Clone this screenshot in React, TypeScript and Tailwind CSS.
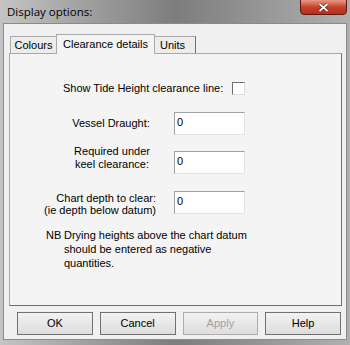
import React from 'react';

const font = "font-['Liberation_Sans',Arial,sans-serif]";

const Field = () => (
  <div className="w-[71px] h-[23px] shrink-0 bg-white border border-t-[#a0a0a0] border-l-[#a0a0a0] border-r-[#e3e3e3] border-b-[#e3e3e3] text-[11px] leading-[13px] pl-[2px] pt-[3px] text-black">
    0
  </div>
);

const Button = ({ text, disabled }: { text: string; disabled?: boolean }) => (
  <div
    className={`w-[76px] h-[23px] flex items-center justify-center border bg-gradient-to-b from-[#f2f2f2] to-[#dddddd] text-[11px] ${
      disabled ? 'text-[#a0a0a0] border-[#adadad]' : 'text-black border-[#707070]'
    }`}
  >
    {text}
  </div>
);

const App = () => {
  return (
    <div className={`w-[350px] h-[345px] overflow-hidden bg-gradient-to-r from-[#c4c4c4] via-[#7d7d7d] to-[#b0b0b0] ${font}`}>
      {/* title bar */}
      <div className="h-[23px] flex items-start justify-between pl-[7px] pr-[3px]">
        <span className="text-[11.5px] leading-[13px] mt-[5px] text-black font-['Open_Sans',sans-serif]">Display options:</span>
        <div className="w-[47px] h-[16px] -mt-[1px] rounded-b-[4px] border border-[#5e1a10] bg-gradient-to-b from-[#e59a86] via-[#c8402a] to-[#b5301b] flex items-center justify-center">
          <svg width="11" height="9" viewBox="0 0 11 9">
            <path d="M1.5 1 L9.5 8 M9.5 1 L1.5 8" stroke="#4a1a12" strokeWidth="3" />
            <path d="M1.5 1 L9.5 8 M9.5 1 L1.5 8" stroke="#fff" strokeWidth="1.8" />
          </svg>
        </div>
      </div>

      {/* client area */}
      <div className="mx-[3px] h-[317px] bg-[#f0f0f0] border border-[#8a8a8a] pt-[9px] px-[5px] text-[11px] leading-[13px] text-black">
        {/* tabs */}
        <div className="flex items-end h-[20px] pl-[1px]">
          <div className="h-[17px] w-[47px] flex items-center justify-center border border-b-0 border-[#a9a9a9] bg-[#ececec]">Colours</div>
          <div className="relative z-10 h-[20px] w-[99px] -mb-px -ml-[1px] -mr-[1px] flex items-start justify-center pt-[3px] border border-b-0 border-[#a9a9a9] bg-[#f4f4f4]">
            Clearance details
          </div>
          <div className="h-[17px] w-[42px] pl-[5px] flex items-center border border-b-0 border-[#a9a9a9] border-r-[#707070] bg-[#ececec]">Units</div>
        </div>
        {/* panel */}
        <div className="h-[253px] w-[333px] bg-[#f4f4f4] border border-[#a9a9a9] border-r-[#707070] border-b-[#707070]">
          <div className="flex items-center mt-[28px] ml-[53px]">
            <span>Show Tide Height clearance line:</span>
            <div className="ml-[9px] w-[13px] h-[13px] bg-white border border-t-[#707070] border-l-[#707070] border-r-[#dcdcdc] border-b-[#dcdcdc]" />
          </div>

          <div className="flex items-center mt-[17px]">
            <div className="w-[164px] text-center pl-[38px]">Vessel Draught:</div>
            <Field />
          </div>

          <div className="flex items-center mt-[14px]">
            <div className="w-[164px] text-center pl-[40px] relative -top-[4px]">
              Required under
              <br />
              keel clearance:
            </div>
            <Field />
          </div>

          <div className="flex items-center mt-[15px]">
            <div className="w-[164px] text-right pr-[18px] leading-[12px] relative top-[2px]">
              Chart depth to clear:
              <br />
              (ie depth below datum)
            </div>
            <Field />
          </div>

          <div className="flex mt-[14px] ml-[36px] leading-[14px]">
            <span className="w-[17px]">NB</span>
            <span className="w-[190px] pl-[1px]">
              Drying heights above the chart datum should be entered as negative quantities.
            </span>
          </div>
        </div>

        {/* buttons */}
        <div className="flex gap-[7px] mt-[6px] pl-[8px]">
          <Button text="OK" />
          <Button text="Cancel" />
          <Button text="Apply" disabled />
          <Button text="Help" />
        </div>
      </div>
    </div>
  );
};

export default App;
